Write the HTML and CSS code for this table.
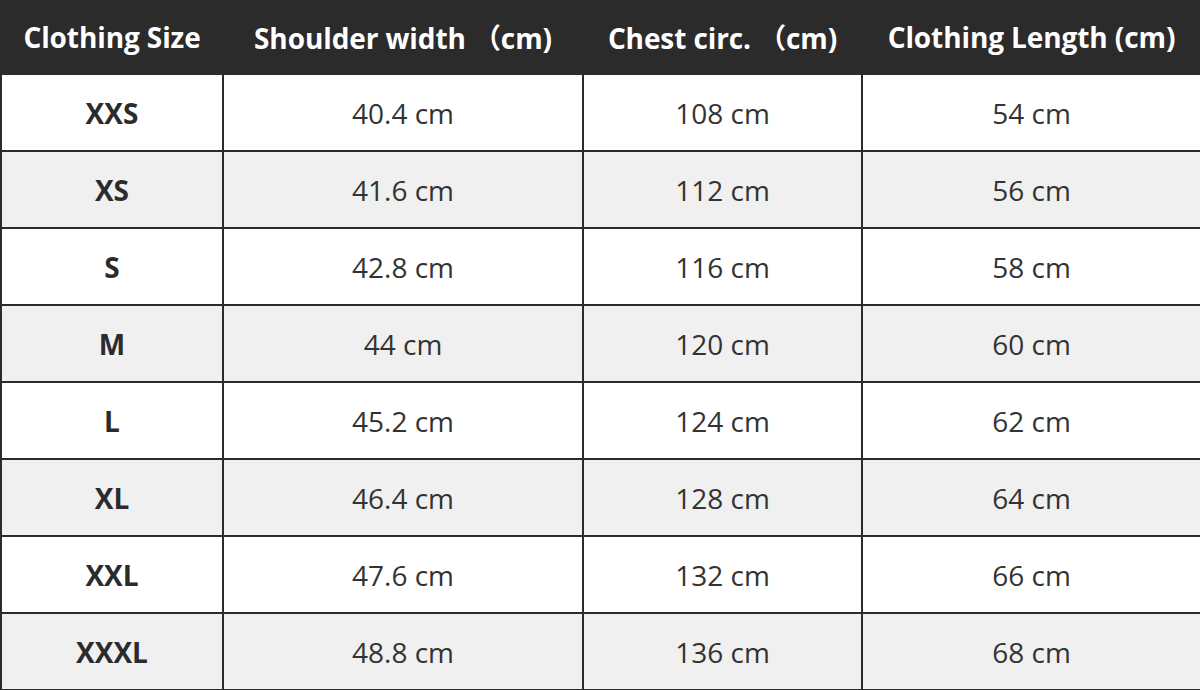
FILE: index.html
```html
<!DOCTYPE html>
<html>
<head>
<meta charset="utf-8">
<link rel="stylesheet" href="styles.css">
</head>
<body>
<table class="size-table">
  <colgroup>
    <col class="c1"><col class="c2"><col class="c3"><col class="c4">
  </colgroup>
  <thead>
    <tr>
      <th>Clothing Size</th>
      <th>Shoulder width <span class="fw">（</span>cm)</th>
      <th>Chest circ. <span class="fw">（</span>cm)</th>
      <th>Clothing Length (cm)</th>
    </tr>
  </thead>
  <tbody>
    <tr><td class="sz">XXS</td><td>40.4 cm</td><td>108 cm</td><td>54 cm</td></tr>
    <tr><td class="sz">XS</td><td>41.6 cm</td><td>112 cm</td><td>56 cm</td></tr>
    <tr><td class="sz">S</td><td>42.8 cm</td><td>116 cm</td><td>58 cm</td></tr>
    <tr><td class="sz">M</td><td>44 cm</td><td>120 cm</td><td>60 cm</td></tr>
    <tr><td class="sz">L</td><td>45.2 cm</td><td>124 cm</td><td>62 cm</td></tr>
    <tr><td class="sz">XL</td><td>46.4 cm</td><td>128 cm</td><td>64 cm</td></tr>
    <tr><td class="sz">XXL</td><td>47.6 cm</td><td>132 cm</td><td>66 cm</td></tr>
    <tr><td class="sz">XXXL</td><td>48.8 cm</td><td>136 cm</td><td>68 cm</td></tr>
  </tbody>
</table>
</body>
</html>
```
FILE: styles.css
```css
html, body {
  margin: 0;
  padding: 0;
  background: #ffffff;
}
.size-table {
  width: 1200px;
  height: 690px;
  border-collapse: collapse;
  table-layout: fixed;
  font-family: "Open Sans", "Noto Sans CJK SC", sans-serif;
  color: #333333;
}
.c1 { width: 222px; }
.c2 { width: 360px; }
.c3 { width: 279px; }
.c4 { width: 339px; }
.size-table th {
  background: #2b2b2b;
  color: #ffffff;
  font-size: 28px;
  font-weight: 700;
  height: 73px;
  padding: 0;
  text-align: center;
  border: 2px solid #2b2b2b;
  border-top: none;
  white-space: nowrap;
  letter-spacing: -0.1px;
}
.fw {
  font-family: "Noto Sans CJK SC", sans-serif;
  font-weight: 700;
}
.size-table td {
  border: 2px solid #2b2b2b;
  text-align: center;
  font-size: 28px;
  padding: 0;
  height: 75px;
}
.size-table tbody tr:nth-child(even) td {
  background: #f0f0f0;
}
.size-table td.sz {
  font-weight: 700;
  color: #2b2b2b;
}
```
